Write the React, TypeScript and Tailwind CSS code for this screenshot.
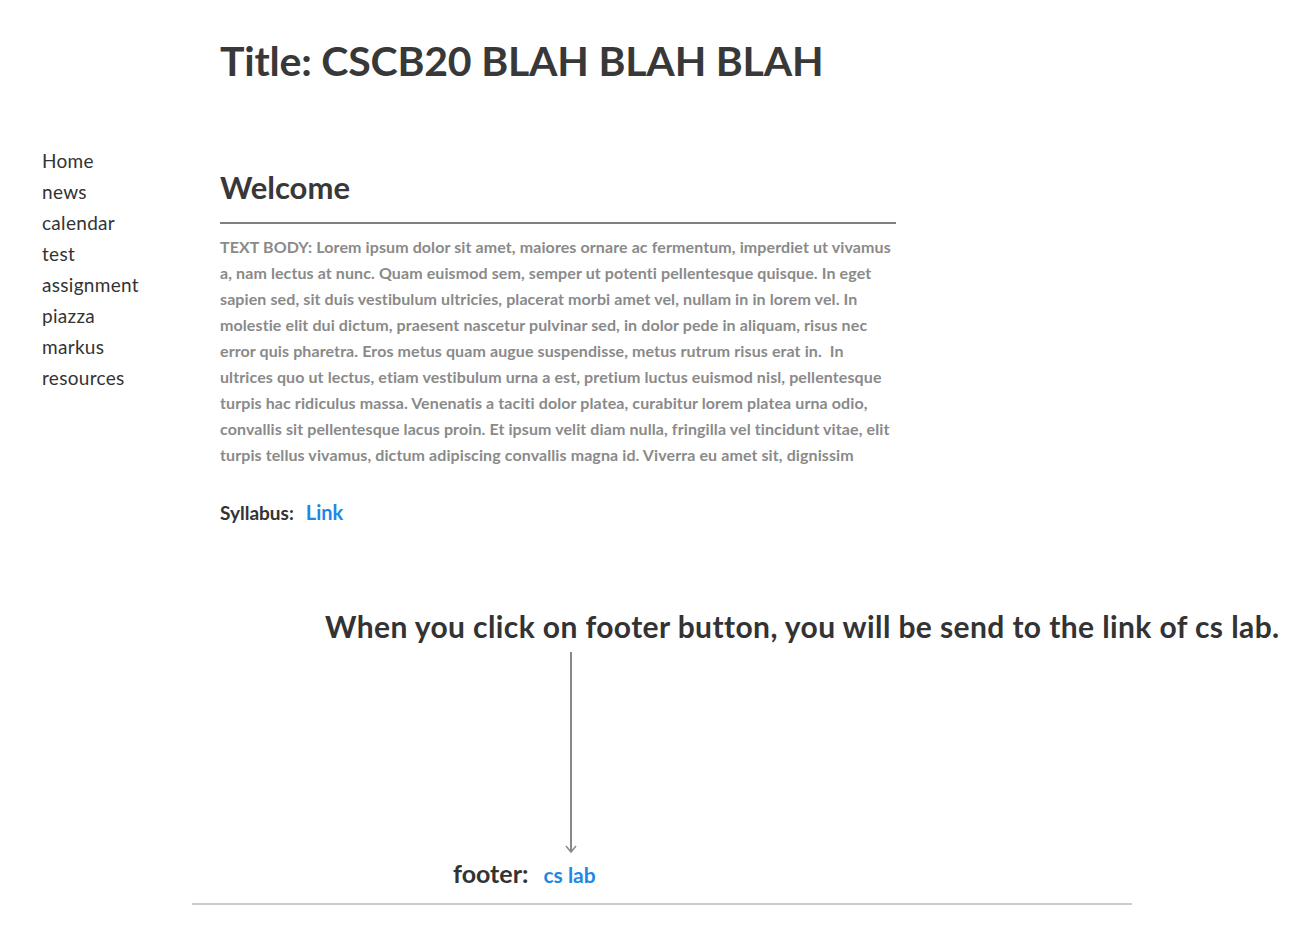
import React from 'react';

const navItems = ['Home', 'news', 'calendar', 'test', 'assignment', 'piazza', 'markus', 'resources'];

const bodyLines = [
  'TEXT BODY: Lorem ipsum dolor sit amet, maiores ornare ac fermentum, imperdiet ut vivamus',
  'a, nam lectus at nunc. Quam euismod sem, semper ut potenti pellentesque quisque. In eget',
  'sapien sed, sit duis vestibulum ultricies, placerat morbi amet vel, nullam in in lorem vel. In',
  'molestie elit dui dictum, praesent nascetur pulvinar sed, in dolor pede in aliquam, risus nec',
  'error quis pharetra. Eros metus quam augue suspendisse, metus rutrum risus erat in.  In',
  'ultrices quo ut lectus, etiam vestibulum urna a est, pretium luctus euismod nisl, pellentesque',
  'turpis hac ridiculus massa. Venenatis a taciti dolor platea, curabitur lorem platea urna odio,',
  'convallis sit pellentesque lacus proin. Et ipsum velit diam nulla, fringilla vel tincidunt vitae, elit',
  'turpis tellus vivamus, dictum adipiscing convallis magna id. Viverra eu amet sit, dignissim',
];

export default function App() {
  return (
    <div className="min-h-[925px] w-[1300px] bg-white text-[#383838] font-['Lato','Open_Sans',sans-serif]">
      <div className="flex">
        {/* sidebar */}
        <nav className="w-[220px] shrink-0 pl-[42px] pt-[148px]">
          <ul className="flex flex-col">
            {navItems.map((item) => (
              <li key={item} className="h-[31px] text-[19px] leading-[26px] tracking-[0.3px] text-[#333]">
                <a href="#">{item}</a>
              </li>
            ))}
          </ul>
        </nav>

        {/* main */}
        <main className="flex-1">
          <h1 className="pt-[36px] text-[41px] font-bold leading-[50px] tracking-[-0.2px]">Title: CSCB20 BLAH BLAH BLAH</h1>
          <h2 className="mt-[81px] text-[31px] font-bold leading-[40px]">Welcome</h2>
          <div className="mt-[15px] h-[2px] w-[676px] bg-[#808080]" />
          <p className="mt-[10px] text-[16px] font-bold leading-[26px] text-[#8a8a8a] tracking-[0.1px]">
            {bodyLines.map((l, i) => (
              <span key={i} className="block whitespace-pre">{l}</span>
            ))}
          </p>
          <div className="mt-[29px] flex items-baseline gap-[12px]">
            <span className="text-[19px] font-bold text-[#333]">Syllabus:</span>
            <a href="#" className="text-[20px] font-bold text-[#1e88e5]">Link</a>
          </div>
        </main>
      </div>

      {/* annotation */}
      <p className="mt-[80px] pl-[325px] text-[30px] font-bold leading-[36px] text-[#333] tracking-[0.4px] whitespace-nowrap">
        When you click on footer button, you will be send to the link of cs lab.
      </p>
      <div className="mt-[8px] pl-[565px]">
        <svg width="12" height="202" viewBox="0 0 12 202">
          <line x1="6" y1="0" x2="6" y2="200" stroke="#888" strokeWidth="2" />
          <polyline points="1,194 6,200 11,194" fill="none" stroke="#888" strokeWidth="1.5" />
        </svg>
      </div>

      {/* footer */}
      <footer>
        <div className="pl-[453px] flex items-baseline gap-[15px] mt-[1px]">
          <span className="text-[25px] font-bold text-[#333]">footer:</span>
          <a href="#" className="text-[21px] font-bold text-[#1e88e5]">cs lab</a>
        </div>
        <div className="mt-[11px] ml-[192px] h-[2px] w-[940px] bg-[#cccccc]" />
      </footer>
    </div>
  );
}
